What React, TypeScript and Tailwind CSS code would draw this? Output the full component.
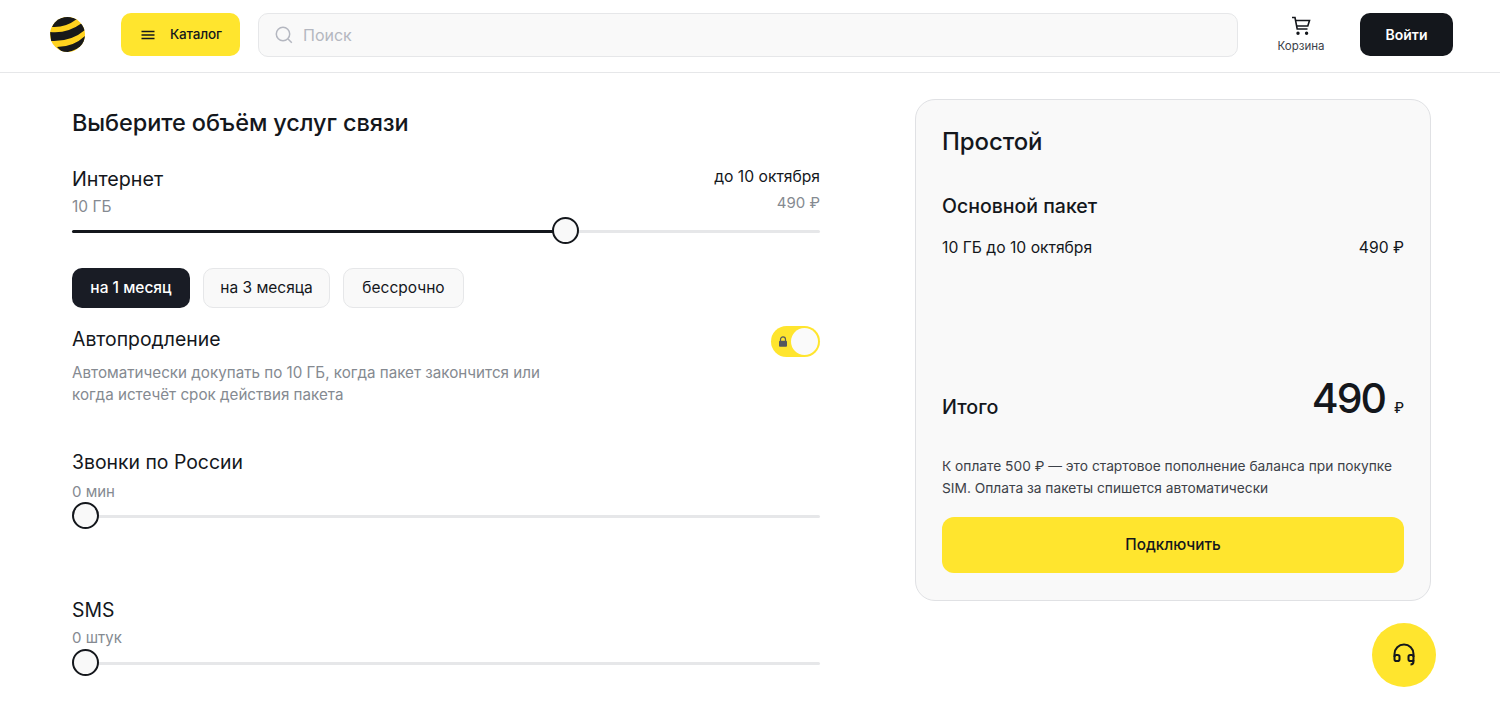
import React from "react";

const font = { fontFamily: '"Inter", "Noto Sans", sans-serif' };

function Logo() {
  return (
    <svg width="37" height="37" viewBox="0 0 37 37">
      <defs>
        <clipPath id="ball"><circle cx="18.5" cy="18.5" r="17.5" /></clipPath>
      </defs>
      <g clipPath="url(#ball)">
        <rect width="37" height="37" fill="#ffd21f" />
        <path d="M3 11 Q16 12 28 3 L18 0 L6 4 Z" fill="#17181a" />
        <path d="M1 16 Q18 18 33 7 L36 14 Q22 26 2 25 Z" fill="#17181a" />
        <path d="M8 31 Q25 31 37 19 L37 26 Q28 35 14 37 Z" fill="#17181a" />
      </g>
    </svg>
  );
}

function Slider({ pct, thumb }: { pct: number; thumb: number }) {
  return (
    <div className="relative h-[28px] flex items-center">
      <div className="w-full h-[3px] rounded-full bg-[#e6e7e9]">
        <div className="h-full rounded-full bg-[#14171c]" style={{ width: `${pct}%` }} />
      </div>
      <div
        className="absolute top-0 w-[27px] h-[27px] rounded-full border-2 border-[#14171c] bg-[#f9f9f9]"
        style={{ left: thumb }}
      />
    </div>
  );
}

export default function App() {
  return (
    <div style={font} className="relative w-full h-[704px] overflow-hidden bg-white text-[#14171c]">
      <header className="h-[73px] border-b border-[#e6e7e9] flex items-center pl-[49px] pr-[47px] pb-[3px]">
        <Logo />
        <button className="ml-[35px] w-[119px] h-[43px] rounded-[10px] bg-[#ffe52e] flex items-center pl-[19px] gap-[14px] text-[13.5px] font-medium tracking-[-0.2px]">
          <svg width="16" height="10" viewBox="0 0 16 10" fill="none" stroke="#14171c" strokeWidth="1.6">
            <path d="M1.5 1.5h13M1.5 5h13M1.5 8.5h13" />
          </svg>
          Каталог
        </button>
        <div className="ml-[18px] flex-1 h-[44px] rounded-[10px] border border-[#e6e7e9] bg-[#f9f9f9] flex items-center pl-[16px] gap-[10px] text-[16px] text-[#b4b7c0]">
          <svg width="18" height="18" viewBox="0 0 18 18" fill="none" stroke="#b4b7c0" strokeWidth="1.5">
            <circle cx="8" cy="8" r="6.7" />
            <path d="M13 13l3.8 3.8" />
          </svg>
          Поиск
        </div>
        <div className="ml-[39px] w-[48px] flex flex-col items-center">
          <svg className="-mt-[1px]" width="20" height="20" viewBox="0 0 20 20" fill="none" stroke="#14171c" strokeWidth="1.6">
            <path d="M1 1.5h3l2.2 11.5h10.3" />
            <path d="M4.6 4.5H18.5l-1.7 5.5H5.7" />
            <circle cx="7" cy="17.2" r="0.9" fill="#14171c" />
            <circle cx="15.6" cy="17.2" r="0.9" fill="#14171c" />
          </svg>
          <span className="mt-[3px] text-[11.5px] leading-[14px] text-[#3c4148]">Корзина</span>
        </div>
        <button className="ml-[35px] w-[93px] h-[43px] rounded-[10px] bg-[#14171c] text-white text-[14px] font-semibold">
          Войти
        </button>
      </header>

      <main className="flex pl-[72px] pt-[26px]">
        <section className="w-[748px] shrink-0">
          <h1 className="text-[23.5px] leading-[48px] font-medium tracking-[-0.1px]">Выберите объём услуг связи</h1>

          <div className="mt-[18px] flex justify-between">
            <div>
              <div className="text-[19.7px] leading-[28px]">Интернет</div>
              <div className="mt-[2px] text-[15.5px] leading-[24px] text-[#858a91]">10 ГБ</div>
            </div>
            <div className="text-right -mt-[1px]">
              <div className="text-[15.7px] leading-[26px]">до 10 октября</div>
              <div className="text-[15px] leading-[26px] text-[#858a91]">490 ₽</div>
            </div>
          </div>
          <div className="mt-[-2px]"><Slider pct={66} thumb={480} /></div>

          <div className="mt-[23px] flex gap-[13px] text-[15.5px]">
            <button className="h-[40px] w-[118px] rounded-[10px] bg-[#191c25] text-white font-medium">на 1 месяц</button>
            <button className="h-[40px] w-[127px] rounded-[10px] bg-[#f9f9f9] border border-[#e6e7e9]">на 3 месяца</button>
            <button className="h-[40px] w-[121px] rounded-[10px] bg-[#f9f9f9] border border-[#e6e7e9]">бессрочно</button>
          </div>

          <div className="mt-[16px] flex justify-between">
            <div>
              <div className="text-[19.4px] leading-[30px]">Автопродление</div>
              <div className="mt-[8px] text-[15.2px] leading-[22px] text-[#858a91] w-[500px]">
                Автоматически докупать по 10 ГБ, когда пакет закончится или
                <br />
                когда истечёт срок действия пакета
              </div>
            </div>
            <div className="relative mt-[2px] w-[49px] h-[31px] rounded-full bg-[#ffe52e] flex items-center pl-[7px]">
              <svg width="10" height="11" viewBox="0 0 10 11">
                <path d="M2.5 5V3.4a2.5 2.5 0 015 0V5" fill="none" stroke="#55585e" strokeWidth="1.2" />
                <rect x="1" y="4.8" width="8" height="6" rx="1" fill="#55585e" />
              </svg>
              <div className="absolute right-[2px] top-[2px] w-[27px] h-[27px] rounded-full bg-[#fafafa]" />
            </div>
          </div>

          <div className="mt-[42px] text-[19.4px] leading-[28px]">Звонки по России</div>
          <div className="mt-[4px] text-[15px] leading-[24px] text-[#858a91]">0 мин</div>
          <div className="mt-[-2px]"><Slider pct={0} thumb={0} /></div>

          <div className="mt-[66px] text-[19.4px] leading-[28px]">SMS</div>
          <div className="mt-[2px] text-[15px] leading-[24px] text-[#858a91]">0 штук</div>
          <div className="mt-[-1px]"><Slider pct={0} thumb={0} /></div>
        </section>

        <aside className="ml-[95px] w-[516px] h-[502px] rounded-[20px] border border-[#e0e1e4] bg-[#f9f9f9] px-[26px] pt-[26px] flex flex-col">
          <div className="text-[24px] leading-[32px] font-medium tracking-[-0.1px]">Простой</div>
          <div className="mt-[34px] text-[19.5px] leading-[28px] font-medium">Основной пакет</div>
          <div className="mt-[16px] flex justify-between text-[15.7px] leading-[24px]">
            <span>10 ГБ до 10 октября</span>
            <span>490 ₽</span>
          </div>
          <div className="mt-[116px] flex justify-between items-center h-[60px]">
            <span className="mt-[4px] text-[19.7px] font-medium">Итого</span>
            <span className="mb-[16px] flex items-baseline">
              <span className="text-[41px] leading-[60px] font-medium tracking-[-2px]">490</span>
              <span className="ml-[9px] text-[14px] font-medium">₽</span>
            </span>
          </div>
          <div className="mt-[19px] text-[13.75px] leading-[22px] text-[#3c4148]">
            К оплате 500 ₽ — это стартовое пополнение баланса при покупке
            <br />
            SIM. Оплата за пакеты спишется автоматически
          </div>
          <button className="mt-[18px] w-full h-[56px] rounded-[12px] bg-[#ffe52e] text-[15.3px] font-medium">Подключить</button>
        </aside>
      </main>

      <div className="absolute left-[1372px] top-[623px] w-[64px] h-[64px] rounded-full bg-[#ffe52e] flex items-center justify-center">
        <svg width="24" height="24" viewBox="0 0 24 24" fill="none" stroke="#14171c" strokeWidth="2">
          <path d="M2.5 14v-3a9.5 9.5 0 0119 0v3" />
          <rect x="2.5" y="12" width="5" height="6" rx="1.8" />
          <rect x="16.5" y="12" width="5" height="6" rx="1.8" />
          <path d="M21.5 17v1.5a3 3 0 01-3 3" />
        </svg>
      </div>
    </div>
  );
}
